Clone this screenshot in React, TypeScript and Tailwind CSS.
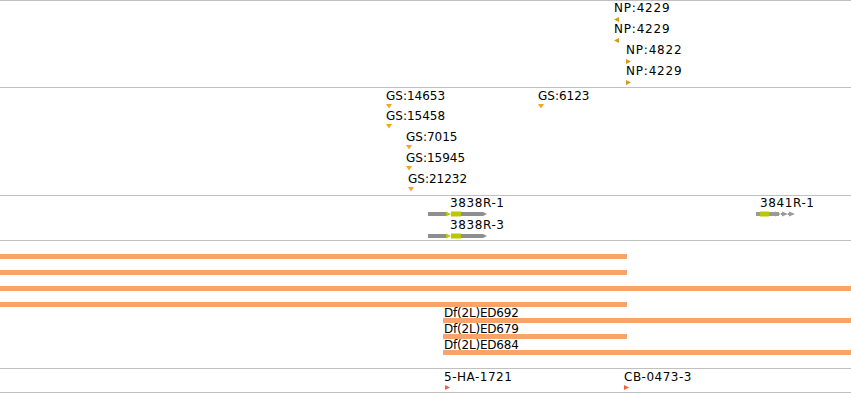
import React from 'react';

type Dir = 'left' | 'right' | 'down';

// strand marker drawn under a feature label
function Tri({ dir, color, className = '' }: { dir: Dir; color: string; className?: string }) {
  const w = dir === 'down' ? 6 : 5;
  const h = 5;
  const pts =
    dir === 'left' ? '5,0 5,5 0,2.5' : dir === 'right' ? '0,0 0,5 5,2.5' : '0,0 6,0 3,4.5';
  return (
    <svg className={`block shrink-0 ${className}`} width={w} height={h} viewBox={`0 0 ${w} ${h}`}>
      <polygon points={pts} fill={color} />
    </svg>
  );
}

// zero-width column so the next feature's margin is a plain coordinate delta
function Feature({ className, children }: { className: string; children: React.ReactNode }) {
  return <div className={`flex w-0 flex-col items-start whitespace-nowrap ${className}`}>{children}</div>;
}

function Label({ text, className = '' }: { text: string; className?: string }) {
  return <span className={`block text-[12px] leading-[12px] text-black ${className}`}>{text}</span>;
}

const NP_COLOR = '#d49a12';
const GS_COLOR = '#f2a623';
const RNAI_COLOR = '#f5603f';

function Gene3838({ className = '' }: { className?: string }) {
  return (
    <svg className={`block ${className}`} width={60} height={6} viewBox="0 0 60 6">
      <rect x={0} y={1} width={18} height={4} fill="#8e8e8e" />
      <polygon points="18,0.5 18,5.5 23,3" fill="#b9c800" />
      <rect x={23} y={0.5} width={10} height={5} fill="#b9c800" />
      <rect x={33} y={1} width={22} height={4} fill="#8e8e8e" />
      <polygon points="55,1 55,5 59,3" fill="#8e8e8e" />
    </svg>
  );
}

function Gene3841({ className = '' }: { className?: string }) {
  return (
    <svg className={`block ${className}`} width={42} height={6} viewBox="0 0 42 6">
      <rect x={0} y={1} width={4} height={4} fill="#9a9a9a" />
      <rect x={4} y={0.5} width={9} height={5} fill="#b9c800" />
      <rect x={13} y={1} width={10} height={4} fill="#9a9a9a" />
      <polygon points="19,0.5 19,5.5 25,3" fill="#9a9a9a" />
      <rect x={25} y={2} width={2} height={2} fill="#9a9a9a" />
      <polygon points="26,0.5 26,5.5 32,3" fill="#9a9a9a" />
      <rect x={32} y={2} width={2} height={2} fill="#9a9a9a" />
      <polygon points="33,0.5 33,5.5 39,3" fill="#9a9a9a" />
    </svg>
  );
}

function Bar({ className }: { className: string }) {
  return <div className={`h-[5px] shrink-0 bg-[#f4a46c] ${className}`} />;
}

export default function App() {
  return (
    <div className="h-[393px] w-[851px] overflow-hidden bg-white font-['DejaVu_Sans',sans-serif]">
      <div className="flex flex-col">
        {/* NP insertions */}
        <div className="flex h-[87px] flex-col border-t border-[#c0c0c0] pt-px tracking-[0.8px]">
          <div className="flex h-[21px]">
            <Feature className="ml-[614px]">
              <Label text="NP:4229" />
              <Tri dir="left" color={NP_COLOR} className="mt-[3px]" />
            </Feature>
          </div>
          <div className="flex h-[21px]">
            <Feature className="ml-[614px]">
              <Label text="NP:4229" />
              <Tri dir="left" color={NP_COLOR} className="mt-[3px]" />
            </Feature>
          </div>
          <div className="flex h-[21px]">
            <Feature className="ml-[626px]">
              <Label text="NP:4822" />
              <Tri dir="right" color={NP_COLOR} className="mt-[3px]" />
            </Feature>
          </div>
          <div className="flex h-[21px]">
            <Feature className="ml-[626px]">
              <Label text="NP:4229" />
              <Tri dir="right" color={NP_COLOR} className="mt-[3px]" />
            </Feature>
          </div>
        </div>

        {/* GS insertions */}
        <div className="flex h-[108px] flex-col border-t border-[#c0c0c0] pt-[2px]">
          <div className="flex h-[20px]">
            <Feature className="ml-[386px]">
              <Label text="GS:14653" />
              <Tri dir="down" color={GS_COLOR} className="mt-[2px]" />
            </Feature>
            <Feature className="ml-[152px]">
              <Label text="GS:6123" />
              <Tri dir="down" color={GS_COLOR} className="mt-[2px]" />
            </Feature>
          </div>
          <div className="flex h-[21px]">
            <Feature className="ml-[386px]">
              <Label text="GS:15458" />
              <Tri dir="down" color={GS_COLOR} className="mt-[2px]" />
            </Feature>
          </div>
          <div className="flex h-[21px]">
            <Feature className="ml-[406px]">
              <Label text="GS:7015" />
              <Tri dir="down" color={GS_COLOR} className="mt-[2px]" />
            </Feature>
          </div>
          <div className="flex h-[21px]">
            <Feature className="ml-[406px]">
              <Label text="GS:15945" />
              <Tri dir="down" color={GS_COLOR} className="mt-[2px]" />
            </Feature>
          </div>
          <div className="flex h-[21px]">
            <Feature className="ml-[408px]">
              <Label text="GS:21232" />
              <Tri dir="down" color={GS_COLOR} className="mt-[2px]" />
            </Feature>
          </div>
        </div>

        {/* transcripts */}
        <div className="flex h-[45px] flex-col border-t border-[#c0c0c0] pt-px tracking-[0.6px]">
          <div className="flex h-[22px]">
            <Feature className="ml-[428px]">
              <Label text="3838R-1" className="ml-[22px]" />
              <Gene3838 className="mt-[2px]" />
            </Feature>
            <Feature className="ml-[328px]">
              <Label text="3841R-1" className="ml-[4px]" />
              <Gene3841 className="mt-[2px]" />
            </Feature>
          </div>
          <div className="flex h-[22px]">
            <Feature className="ml-[428px]">
              <Label text="3838R-3" className="ml-[22px]" />
              <Gene3838 className="mt-[2px]" />
            </Feature>
          </div>
        </div>

        {/* deficiencies */}
        <div className="flex h-[128px] flex-col border-t border-[#c0c0c0] pt-[13px] tracking-[-0.2px]">
          <Bar className="w-[627px]" />
          <div className="h-[11px]" />
          <Bar className="w-[627px]" />
          <div className="h-[11px]" />
          <Bar className="w-[851px]" />
          <div className="h-[11px]" />
          <Bar className="w-[627px]" />
          <div className="h-[11px] whitespace-nowrap pl-[444px]">
            <Label text="Df(2L)ED692" className="leading-[11px]" />
          </div>
          <Bar className="ml-[443px] w-[408px]" />
          <div className="h-[11px] whitespace-nowrap pl-[444px]">
            <Label text="Df(2L)ED679" className="leading-[11px]" />
          </div>
          <Bar className="ml-[443px] w-[184px]" />
          <div className="h-[11px] whitespace-nowrap pl-[444px]">
            <Label text="Df(2L)ED684" className="leading-[11px]" />
          </div>
          <Bar className="ml-[443px] w-[408px]" />
        </div>

        {/* RNAi */}
        <div className="flex h-[25px] border-y border-[#c0c0c0] pt-[2px] tracking-[0.5px]">
          <Feature className="ml-[444px]">
            <Label text="5-HA-1721" />
            <Tri dir="right" color={RNAI_COLOR} className="ml-px mt-[2px]" />
          </Feature>
          <Feature className="ml-[180px]">
            <Label text="CB-0473-3" />
            <Tri dir="right" color={RNAI_COLOR} className="mt-[2px]" />
          </Feature>
        </div>
      </div>
    </div>
  );
}
